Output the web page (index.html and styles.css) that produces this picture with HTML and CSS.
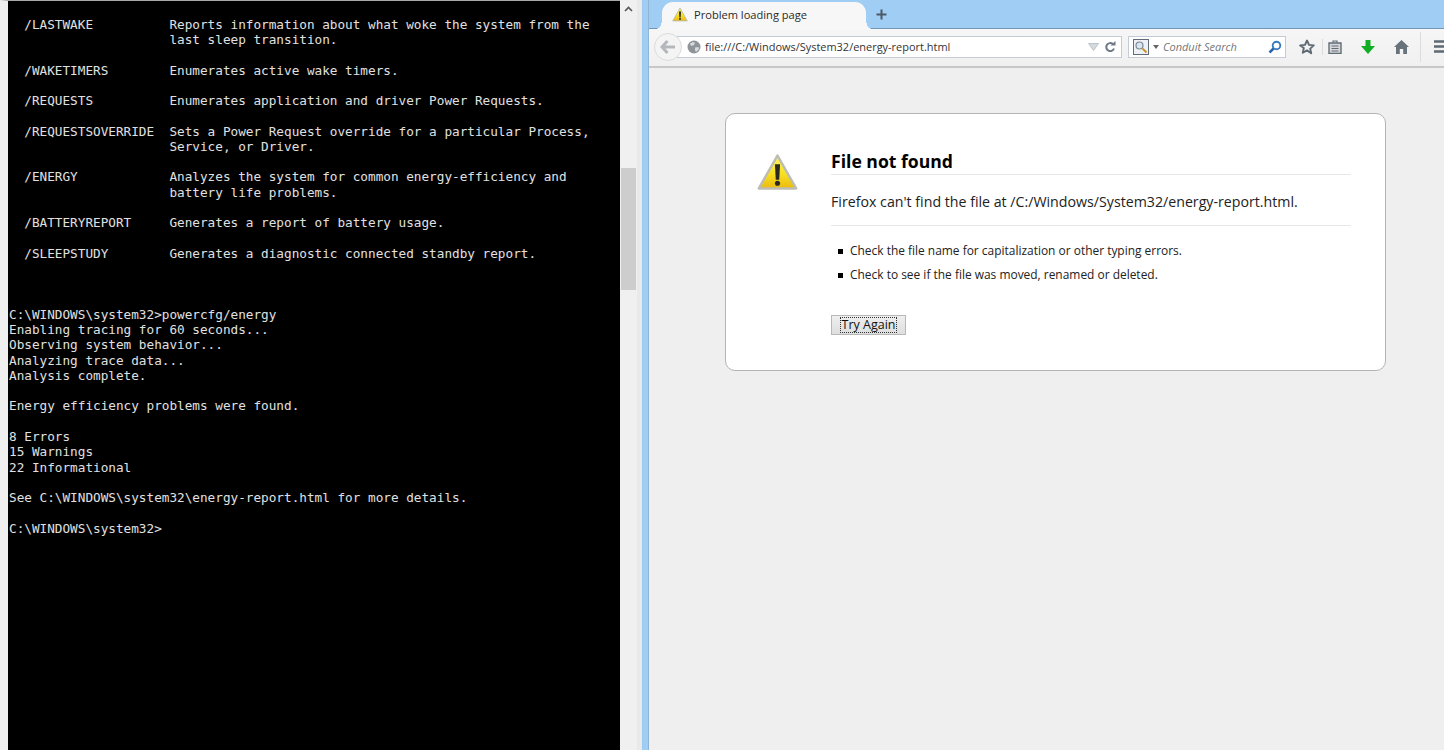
FILE: index.html
```html
<!DOCTYPE html>
<html lang="en">
<head>
<meta charset="utf-8">
<title>Problem loading page</title>
<link rel="stylesheet" href="styles.css">
</head>
<body>
<div class="desktop">
  <section class="console">
    <pre class="console-text">  /LASTWAKE          Reports information about what woke the system from the
                     last sleep transition.

  /WAKETIMERS        Enumerates active wake timers.

  /REQUESTS          Enumerates application and driver Power Requests.

  /REQUESTSOVERRIDE  Sets a Power Request override for a particular Process,
                     Service, or Driver.

  /ENERGY            Analyzes the system for common energy-efficiency and
                     battery life problems.

  /BATTERYREPORT     Generates a report of battery usage.

  /SLEEPSTUDY        Generates a diagnostic connected standby report.



C:\WINDOWS\system32&gt;powercfg/energy
Enabling tracing for 60 seconds...
Observing system behavior...
Analyzing trace data...
Analysis complete.

Energy efficiency problems were found.

8 Errors
15 Warnings
22 Informational

See C:\WINDOWS\system32\energy-report.html for more details.

C:\WINDOWS\system32&gt;</pre>
  </section>
  <div class="scrollbar">
    <svg class="scroll-arrow" width="9" height="6" viewBox="0 0 9 6"><path d="M1 5l3.500-3.500L8 5" fill="none" stroke="#555" stroke-width="1.600"/></svg>
    <div class="scroll-thumb"></div>
  </div>
  <div class="window-frame"></div>
  <section class="browser">
    <header class="tabbar">
      <div class="tab">
        <svg class="tab-icon" width="16" height="15" viewBox="0 0 40 37"><use href="#warn"/></svg>
        <span>Problem loading page</span>
      </div>
      <svg class="new-tab" width="11" height="11" viewBox="0 0 11 11"><path d="M5.500 0.500v10M0.500 5.500h10" stroke="#4a5a68" stroke-width="2"/></svg>
    </header>
    <div class="toolbar">
      <div class="back">
        <svg width="16" height="14" viewBox="0 0 16 14"><path d="M7.500 1L2 7l5.500 6M2.500 7H15" fill="none" stroke="#b4b8bc" stroke-width="3"/></svg>
      </div>
      <div class="urlbar">
        <svg class="globe" width="14" height="14" viewBox="0 0 14 14"><circle cx="7" cy="7" r="6.500" fill="#8f9498"/><path d="M3 3.500l3-1.500 2 1-1 2-3 1zM8 7.500l3.500-.5.500 2-3 3-1-2z" fill="#d9dcdf"/></svg>
        <span class="url">file:///C:/Windows/System32/energy-report.html</span>
        <svg class="url-drop" width="11" height="8" viewBox="0 0 11 8"><path d="M.5.500h10L5.500 7.500z" fill="#d5dadf" stroke="#bcc3ca"/></svg>
        <svg class="reload" width="12" height="12" viewBox="0 0 12 12"><path d="M10 7.500A4 4 0 1 1 8.800 3" fill="none" stroke="#6f7a84" stroke-width="2"/><path d="M6.500 4.500H11.500V0z" fill="#6f7a84"/></svg>
      </div>
      <div class="searchbar">
        <svg class="engine" width="16" height="16" viewBox="0 0 16 16"><rect x=".5" y=".5" width="15" height="15" fill="#eef2f6" stroke="#5e6c7b"/><circle cx="6.500" cy="6.500" r="3.500" fill="#d7e6f3" stroke="#7c8894" stroke-width="1.200"/><path d="M9.500 9.500l4 4" stroke="#c9942d" stroke-width="2"/></svg>
        <svg class="engine-drop" width="6" height="4" viewBox="0 0 6 4"><path d="M0 0h6L3 4z" fill="#666"/></svg>
        <span class="search-text">Conduit Search</span>
        <svg class="search-go" width="14" height="14" viewBox="0 0 14 14"><circle cx="8.500" cy="5.500" r="3.800" fill="none" stroke="#3a78bd" stroke-width="1.900"/><path d="M5.500 8.500L1.500 12.500" stroke="#2a65ac" stroke-width="2.500"/></svg>
      </div>
      <div class="tools">
        <svg class="tool-star" width="16" height="16" viewBox="0 0 16 16"><path d="M8 1.500l2 4.400 4.800.5-3.600 3.200 1 4.700L8 11.400l-4.200 2.400 1-4.700L1.200 6.400 6 5.900z" fill="none" stroke="#5f6a73" stroke-width="1.900" stroke-linejoin="round"/></svg>
        <span class="tool-sep"></span>
        <svg class="tool-clip" width="14" height="14" viewBox="0 0 14 14"><path d="M1 3h12v10.500H1z" fill="#d6d9dc" stroke="#626c75" stroke-width="1.400"/><path d="M5 2.500V1h4v1.500M3.500 6h7M3.500 8.500h7M3.500 11h7" fill="none" stroke="#626c75" stroke-width="1.200"/></svg>
        <svg class="tool-down" width="14" height="14" viewBox="0 0 14 14"><path d="M4.500 0h5v6H14l-7 8-7-8h4.500z" fill="#12ad25"/></svg>
        <svg class="tool-home" width="15" height="14" viewBox="0 0 15 14"><path d="M7.500 0L15 7h-2v7H9.200V9H5.800v5H2V7H0z" fill="#68737c"/></svg>
        <span class="tool-sep tool-sep-tall"></span>
        <svg class="tool-menu" width="12" height="13" viewBox="0 0 12 13"><path d="M0 1.500h12M0 6.500h12M0 11.500h12" stroke="#5f6a73" stroke-width="2.400"/></svg>
      </div>
    </div>
    <main class="page">
      <article class="card">
        <svg class="warning" width="41" height="38" viewBox="0 0 40 37">
          <defs>
            <linearGradient id="warnfill" gradientUnits="userSpaceOnUse" x1="0" y1="3" x2="0" y2="35"><stop offset="0" stop-color="#fdf65a"/><stop offset=".55" stop-color="#f8e020"/><stop offset="1" stop-color="#ecb80e"/></linearGradient>
            <g id="warn">
              <path d="M20 2.500L38.200 34.500H1.800z" fill="url(#warnfill)" stroke="#bdbdb4" stroke-width="2.400" stroke-linejoin="round"/>
              <path d="M17.500 11h5l-.8 15h-3.400z" fill="#2a2a22"/>
              <circle cx="20" cy="29.500" r="2.500" fill="#2a2a22"/>
            </g>
          </defs>
          <use href="#warn"/>
        </svg>
        <div class="message">
          <h1>File not found</h1>
          <p class="lead">Firefox can't find the file at /C:/Windows/System32/energy-report.html.</p>
          <ul>
            <li>Check the file name for capitalization or other typing errors.</li>
            <li>Check to see if the file was moved, renamed or deleted.</li>
          </ul>
          <button class="retry" type="button"><span>Try Again</span></button>
        </div>
      </article>
    </main>
  </section>
</div>
</body>
</html>
```
FILE: styles.css
```css
* { box-sizing: border-box; }
html, body { margin: 0; height: 100%; overflow: hidden; }
body { font-family: "Open Sans", "Noto Sans", sans-serif; }

.desktop { display: flex; width: 1444px; height: 750px; }

.console {
  width: 620px;
  flex: none;
  background: #000;
  border-left: 8px solid #f0f0f0;
  border-top: 1px solid #a8a8a8;
  padding: 15.800px 0 0 1px;
}
.console-text {
  margin: 0;
  font-family: "DejaVu Sans Mono", "Liberation Mono", monospace;
  font-size: 12.690px;
  line-height: 15.270px;
  color: #e0e0e0;
}

.scrollbar {
  width: 17px;
  flex: none;
  background: #f0f0f0;
  padding-top: 6px;
  display: flex;
  flex-direction: column;
  align-items: center;
}
.scroll-arrow { display: block; }
.scroll-thumb {
  width: 15px;
  height: 122px;
  margin-top: 156px;
  margin-right: 1px;
  background: #cdcdcd;
}

.window-frame {
  width: 12px;
  flex: none;
  background: linear-gradient(90deg, #e9e9e9 0 5px, #9cc9ef 5px 6px, #a0cdf3 6px 11px, #8fb4d6 11px);
}

.browser { flex: 1; display: flex; flex-direction: column; min-width: 0; }

.tabbar {
  height: 29px;
  flex: none;
  background: #a0cdf3;
  border-bottom: 1px solid #6f97b8;
  display: flex;
  align-items: flex-start;
  padding: 2px 0 0 13px;
}
.tab {
  position: relative;
  width: 204px;
  height: 27px;
  background: #f7f7f7;
  border-radius: 11px 11px 0 0;
  display: flex;
  align-items: center;
  gap: 6px;
  padding: 0 0 3px 10px;
  font-size: 11.100px;
  color: #2a2a2a;
}
.tab::before, .tab::after {
  content: "";
  position: absolute;
  bottom: 0;
  width: 5px;
  height: 10px;
  background: radial-gradient(ellipse 5px 10px at var(--cx) 0, #a0cdf3 96%, #f7f7f7 100%);
}
.tab::before { --cx: 0; left: -5px; }
.tab::after { --cx: 100%; right: -5px; }
.new-tab { margin: 7px 0 0 10px; }

.toolbar {
  height: 39px;
  flex: none;
  background: linear-gradient(#f6f6f6, #f0f0f0);
  border-bottom: 2px solid #c8c8c8;
  display: flex;
  align-items: center;
  padding: 0 0 2px 5px;
}
.toolbar > * { flex: none; }
.back {
  width: 28px;
  height: 28px;
  border-radius: 50%;
  background: #f4f4f4;
  border: 1px solid #dcdcdc;
  display: flex;
  align-items: center;
  justify-content: center;
  z-index: 1;
}
.urlbar {
  width: 445px;
  height: 22px;
  margin-left: -5px;
  padding: 0 5px 0 9px;
  background: #fff;
  border: 1px solid #c3ccd6;
  display: flex;
  align-items: center;
  gap: 4px;
}
.url { flex: 1; font-size: 10.960px; color: #333; white-space: nowrap; }
.url-drop { margin-right: 1px; }
.searchbar {
  width: 158px;
  height: 22px;
  margin-left: 6px;
  padding: 0 3px 0 4px;
  background: #fff;
  border: 1px solid #c3ccd6;
  display: flex;
  align-items: center;
}
.engine-drop { margin-left: 4px; }
.search-text {
  flex: 1;
  margin-left: 4px;
  font-size: 11px;
  font-style: italic;
  color: #777;
  white-space: nowrap;
}
.tools { display: flex; align-items: center; margin-left: 13px; }
.tools > * { flex: none; }
.tool-sep { width: 1px; height: 16px; background: #dcdcdc; margin-left: 7px; }
.tool-clip { margin-left: 5px; }
.tool-down { margin-left: 19px; }
.tool-home { margin-left: 19px; }
.tool-sep-tall { height: 30px; margin-left: 11px; }
.tool-menu { margin-left: 13px; }

.page { flex: 1; background: #efefef; padding: 45px 0 0 76px; }

.card {
  width: 661px;
  height: 258px;
  background: #fff;
  border: 1px solid #b4b4b4;
  border-radius: 10px;
  display: flex;
  padding: 39px 34px 0 31px;
}
.warning { flex: none; margin-right: 33px; }
.message { flex: 1; }
h1 {
  margin: -1px 0 0;
  padding-bottom: 3px;
  border-bottom: 1px solid #e6e6e6;
  font-size: 17.600px;
  line-height: 19px;
  font-weight: 700;
  color: #000;
}
.lead {
  margin: 0;
  padding: 16px 0 12px;
  border-bottom: 1px solid #e6e6e6;
  font-size: 14.200px;
  line-height: 22px;
  color: #222;
}
ul { margin: 13px 0 0; padding: 0; list-style: none; }
li {
  position: relative;
  padding-left: 19px;
  height: 23.500px;
  font-size: 11.950px;
  line-height: 24px;
  color: #222;
}
li::before {
  content: "";
  position: absolute;
  left: 7px;
  top: 10px;
  width: 5px;
  height: 5px;
  background: #000;
}
.retry {
  display: block;
  margin-top: 29px;
  width: 75px;
  height: 20px;
  padding: 1px;
  background: linear-gradient(#efefef, #dedede);
  border: 1px solid #b8b8b8;
  font: 12.500px/14px "Open Sans", sans-serif;
  color: #111;
}
.retry span {
  display: block;
  height: 16px;
  margin: 0 7px 0 7px;
  border: 1px dotted #333;
  white-space: nowrap;
}
```
